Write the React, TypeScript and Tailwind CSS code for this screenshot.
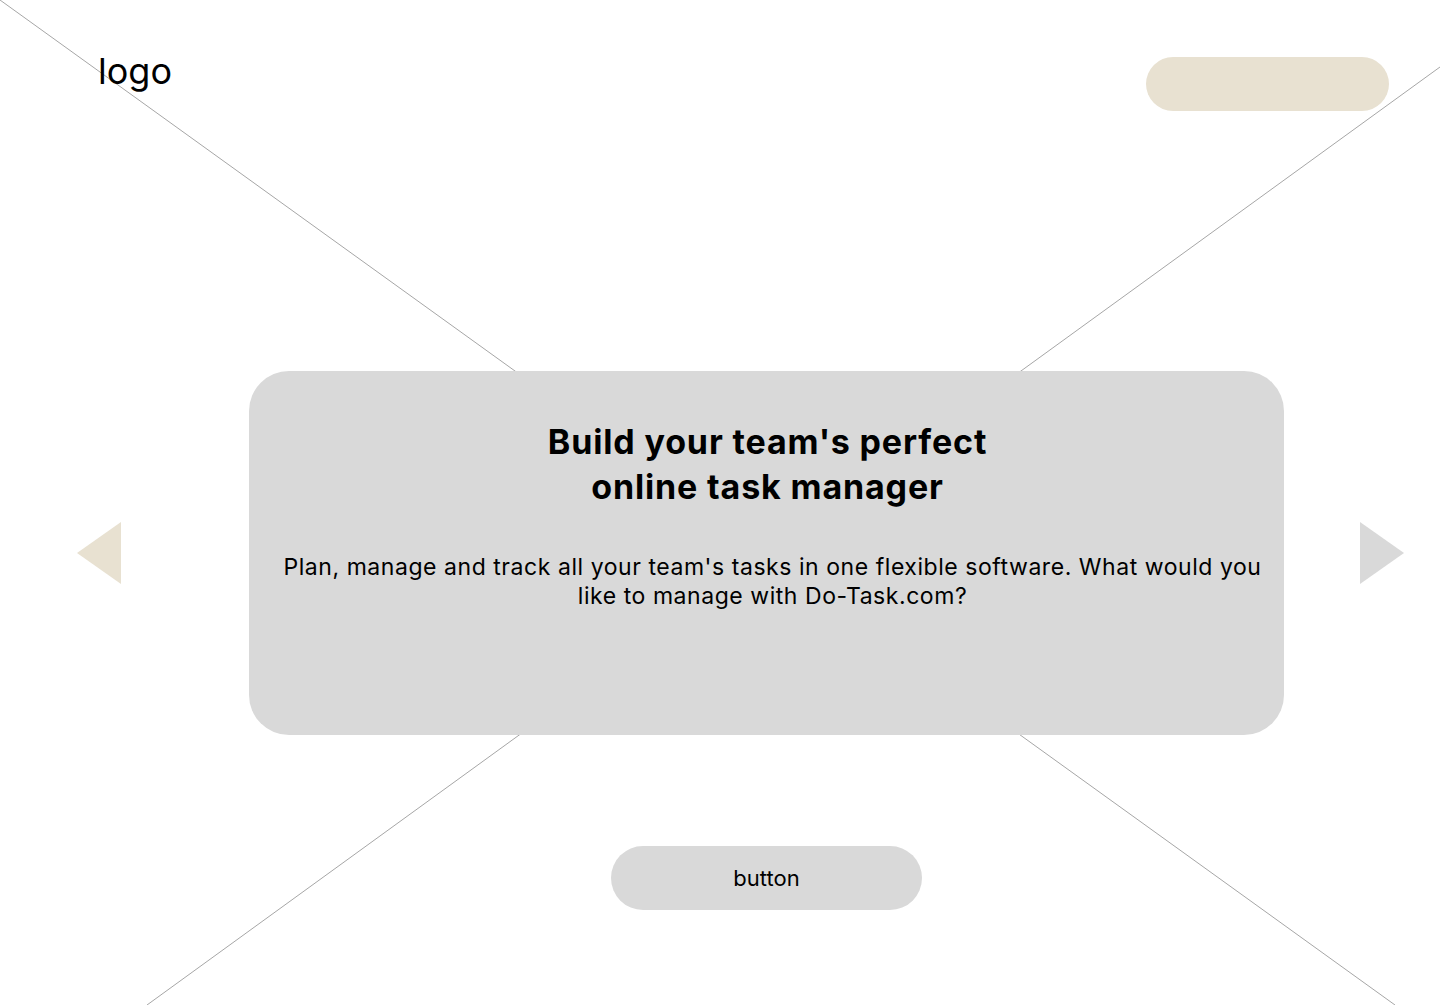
import React from 'react';

const Backdrop: React.FC = () => (
  <svg className="pointer-events-none absolute inset-0" width="1440" height="1005" viewBox="0 0 1440 1005">
    <line x1="0" y1="0" x2="1395" y2="1005" stroke="#a6a6a6" strokeWidth="1" />
    <line x1="1440" y1="67" x2="147" y2="1005" stroke="#a6a6a6" strokeWidth="1" />
  </svg>
);

const App: React.FC = () => {
  return (
    <div className="relative h-[1005px] w-[1440px] overflow-hidden bg-white font-['Inter',sans-serif] text-black">
      <Backdrop />

      <div className="relative flex flex-col">
        {/* Header */}
        <div className="flex items-start justify-between pl-[98px] pr-[51px] pt-[53px]">
          <div className="text-[36px] leading-none">logo</div>
          <div className="mt-[4px] h-[54px] w-[243px] rounded-full bg-[#e8e1d1]" />
        </div>

        {/* Slide */}
        <div className="mt-[260px] flex items-start pl-[77px]">
          <div className="flex h-[364px] items-center">
            <svg width="44" height="62" viewBox="0 0 44 62">
              <polygon points="0,31 44,0 44,62" fill="#e8e1d1" />
            </svg>
          </div>

          <div className="ml-[128px] flex w-[1035px] flex-col items-center">
            <div className="flex h-[364px] w-full flex-col items-center rounded-[40px] bg-[#d9d9d9] px-[20px] pt-[48px] text-center">
              <h1 className="ml-[2px] text-[34px] font-bold leading-[45px] tracking-[0.85px]">
                Build your team's perfect
                <br />
                online task manager
              </h1>
              <p className="ml-[12px] mt-[44px] text-[23px] leading-[29px] tracking-[0.55px]">
                Plan, manage and track all your team's tasks in one flexible software. What would you like to manage with Do-Task.com?
              </p>
            </div>

            <button className="mt-[111px] flex h-[64px] w-[311px] items-center justify-center rounded-full bg-[#d9d9d9] text-[22px]">
              button
            </button>
          </div>

          <div className="ml-[76px] flex h-[364px] items-center">
            <svg width="44" height="62" viewBox="0 0 44 62">
              <polygon points="0,0 44,31 0,62" fill="#d9d9d9" />
            </svg>
          </div>
        </div>
      </div>
    </div>
  );
};

export default App;
